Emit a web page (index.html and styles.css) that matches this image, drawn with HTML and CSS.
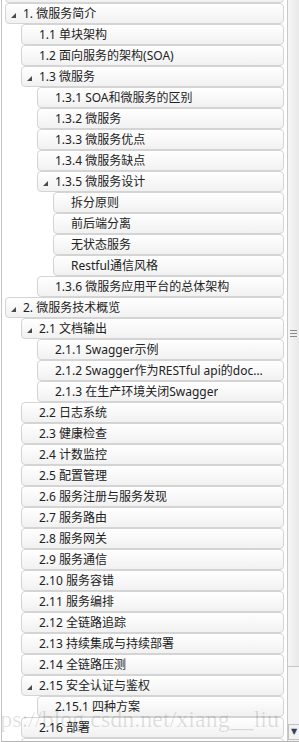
FILE: index.html
```html
<!DOCTYPE html>
<html lang="zh-CN">
<head>
	<meta charset="UTF-8">
	<title>目录</title>
	<link rel="stylesheet" href="styles.css">
</head>
<body>
	<div class="frame">
		<div class="tree">
			<div class="node lv1 hidden-top"><span class="toggle"></span><span class="label"></span></div>
			<div class="node lv1"><span class="toggle open"></span><span class="label">1. 微服务简介</span></div>
			<div class="node lv2"><span class="toggle"></span><span class="label">1.1 单块架构</span></div>
			<div class="node lv2"><span class="toggle"></span><span class="label">1.2 面向服务的架构(SOA)</span></div>
			<div class="node lv2"><span class="toggle open"></span><span class="label">1.3 微服务</span></div>
			<div class="node lv3"><span class="toggle"></span><span class="label">1.3.1 SOA和微服务的区别</span></div>
			<div class="node lv3"><span class="toggle"></span><span class="label">1.3.2 微服务</span></div>
			<div class="node lv3"><span class="toggle"></span><span class="label">1.3.3 微服务优点</span></div>
			<div class="node lv3"><span class="toggle"></span><span class="label">1.3.4 微服务缺点</span></div>
			<div class="node lv3"><span class="toggle open"></span><span class="label">1.3.5 微服务设计</span></div>
			<div class="node lv4"><span class="toggle"></span><span class="label">拆分原则</span></div>
			<div class="node lv4"><span class="toggle"></span><span class="label">前后端分离</span></div>
			<div class="node lv4"><span class="toggle"></span><span class="label">无状态服务</span></div>
			<div class="node lv4"><span class="toggle"></span><span class="label">Restful通信风格</span></div>
			<div class="node lv3"><span class="toggle"></span><span class="label">1.3.6 微服务应用平台的总体架构</span></div>
			<div class="node lv1"><span class="toggle open"></span><span class="label">2. 微服务技术概览</span></div>
			<div class="node lv2"><span class="toggle open"></span><span class="label">2.1 文档输出</span></div>
			<div class="node lv3"><span class="toggle"></span><span class="label">2.1.1 Swagger示例</span></div>
			<div class="node lv3"><span class="toggle"></span><span class="label">2.1.2 Swagger作为RESTful api的documentation</span></div>
			<div class="node lv3"><span class="toggle"></span><span class="label">2.1.3 在生产环境关闭Swagger</span></div>
			<div class="node lv2"><span class="toggle"></span><span class="label">2.2 日志系统</span></div>
			<div class="node lv2"><span class="toggle"></span><span class="label">2.3 健康检查</span></div>
			<div class="node lv2"><span class="toggle"></span><span class="label">2.4 计数监控</span></div>
			<div class="node lv2"><span class="toggle"></span><span class="label">2.5 配置管理</span></div>
			<div class="node lv2"><span class="toggle"></span><span class="label">2.6 服务注册与服务发现</span></div>
			<div class="node lv2"><span class="toggle"></span><span class="label">2.7 服务路由</span></div>
			<div class="node lv2"><span class="toggle"></span><span class="label">2.8 服务网关</span></div>
			<div class="node lv2"><span class="toggle"></span><span class="label">2.9 服务通信</span></div>
			<div class="node lv2"><span class="toggle"></span><span class="label">2.10 服务容错</span></div>
			<div class="node lv2"><span class="toggle"></span><span class="label">2.11 服务编排</span></div>
			<div class="node lv2"><span class="toggle"></span><span class="label">2.12 全链路追踪</span></div>
			<div class="node lv2"><span class="toggle"></span><span class="label">2.13 持续集成与持续部署</span></div>
			<div class="node lv2"><span class="toggle"></span><span class="label">2.14 全链路压测</span></div>
			<div class="node lv2"><span class="toggle open"></span><span class="label">2.15 安全认证与鉴权</span></div>
			<div class="node lv3"><span class="toggle"></span><span class="label">2.15.1 四种方案</span></div>
			<div class="node lv2"><span class="toggle"></span><span class="label">2.16 部署</span></div>
			<div class="node lv2"><span class="toggle"></span><span class="label"></span></div>
		</div>
		<div class="scrollbar">
			<div class="thumb"><span class="grip"></span></div>
			<div class="track"></div>
			<div class="arrow-down">&#9660;</div>
		</div>
		<div class="watermark">https://blog.csdn.net/xiang__liu</div>
	</div>
</body>
</html>
```

FILE: styles.css
```css
html, body {
	margin: 0;
	padding: 0;
	background: #fff;
}
.frame {
	position: relative;
	display: flex;
	width: 298px;
	height: 741px;
	margin-left: 1px;
	border-left: 1px solid #c4c4c4;
	border-bottom: 1px solid #b4b4b4;
	overflow: hidden;
}
.tree {
	flex: 1;
	padding: 0 3px 0 3px;
	overflow: hidden;
	font: 12px/19px "Noto Sans", "Noto Sans CJK SC", sans-serif;
	color: #222;
}
.node {
	display: flex;
	align-items: center;
	height: 21px;
	box-sizing: border-box;
	padding-left: 5px;
	padding-right: 15px;
	border: 1px solid #d4d4d4;
	border-radius: 4px;
	background: linear-gradient(#ffffff, #f1f1f1);
	white-space: nowrap;
}
.hidden-top {
	margin-top: -18px;
}
.lv2 { margin-left: 16px; }
.lv3 { margin-left: 32px; }
.lv4 { margin-left: 48px; }
.toggle {
	flex: none;
	width: 12px;
	height: 5px;
	margin-top: 3px;
}
.toggle.open::before {
	content: "";
	display: block;
	width: 0;
	height: 0;
	border-left: 5px solid transparent;
	border-bottom: 5px solid #4a4a4a;
}
.label {
	overflow: hidden;
	text-overflow: ellipsis;
}
.scrollbar {
	flex: none;
	display: flex;
	flex-direction: column;
	width: 12px;
	border-left: 1px solid #c9c9c9;
	background: #f0f0f0;
}
.thumb {
	height: 667px;
	box-sizing: border-box;
	border-right: 1px solid #d2d2d2;
	border-bottom: 1px solid #c6c6c6;
	background: linear-gradient(to right, #f6f6f6, #e9e9e9);
	display: flex;
	align-items: center;
	justify-content: center;
}
.grip {
	display: block;
	width: 7px;
	height: 5px;
	border-top: 1px solid #8a8a8a;
	border-bottom: 1px solid #8a8a8a;
	background: linear-gradient(transparent 2px, #8a8a8a 2px, #8a8a8a 3px, transparent 3px);
}
.track {
	flex: 1;
	background: #f4f4f4;
}
.arrow-down {
	height: 16px;
	box-sizing: border-box;
	border: 1px solid #c2c2c2;
	background: #f2f2f2;
	color: #2f3f60;
	font: 8px/14px "DejaVu Sans", sans-serif;
	text-align: center;
	margin-bottom: 1px;
}
.watermark {
	position: absolute;
	left: -27px;
	top: 707px;
	font: 24px/1 "Liberation Serif", serif;
	color: rgba(0, 0, 0, 0.12);
	white-space: nowrap;
	pointer-events: none;
}
```
